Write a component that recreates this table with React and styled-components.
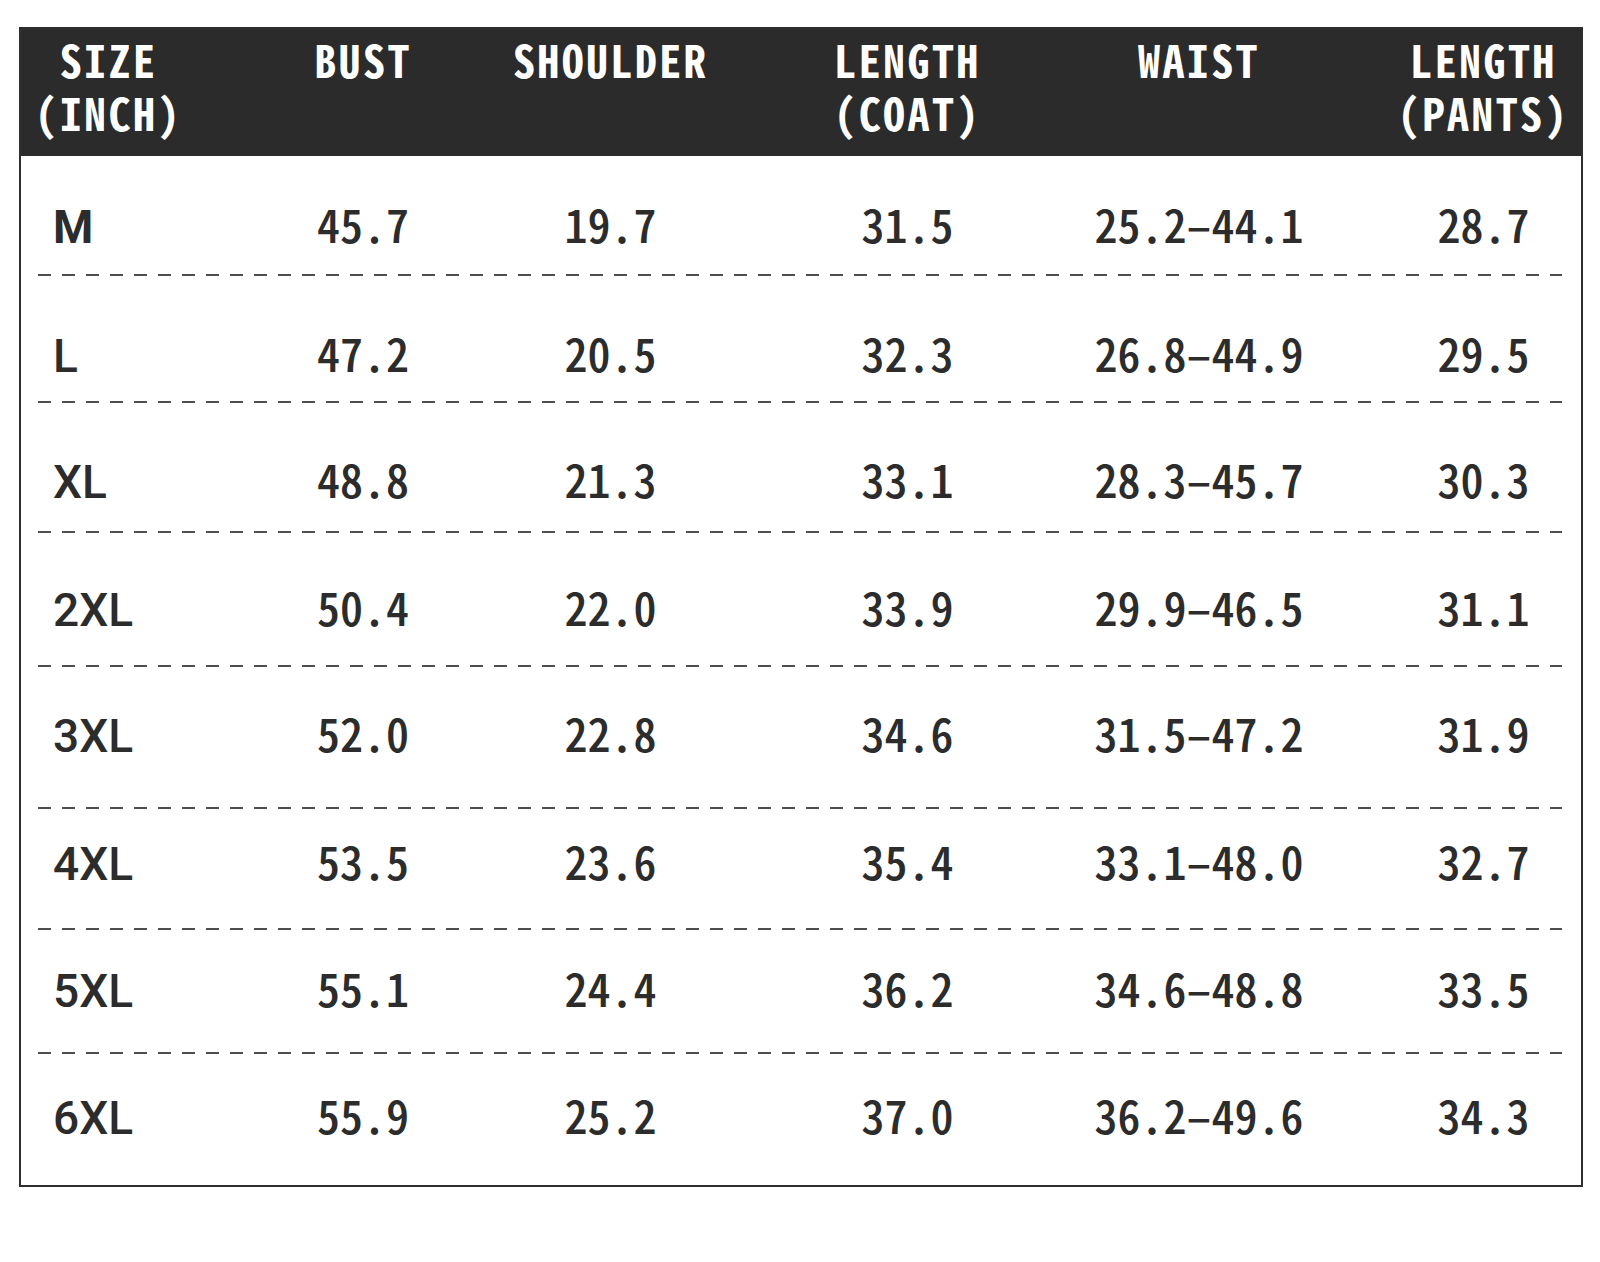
import styled, { createGlobalStyle } from 'styled-components';

const columns = [
  { title: 'SIZE\n(INCH)', width: 215, shift: -20 },
  { title: 'BUST', width: 250, shift: 2 },
  { title: 'SHOULDER', width: 273, shift: -12 },
  { title: 'LENGTH\n(COAT)', width: 295, shift: 1 },
  { title: 'WAIST', width: 288, shift: 1 },
  { title: 'LENGTH\n(PANTS)', width: 239, shift: 22 },
];

// above / below: space around the text line, the dashed rules are not evenly spread
const rows = [
  { size: 'M', values: ['45.7', '19.7', '31.5', '25.2–44.1', '28.7'], above: 44, below: 28, strong: true },
  { size: 'L', values: ['47.2', '20.5', '32.3', '26.8–44.9', '29.5'], above: 53, below: 26 },
  { size: 'XL', values: ['48.8', '21.3', '33.1', '28.3–45.7', '30.3'], above: 52, below: 30 },
  { size: '2XL', values: ['50.4', '22.0', '33.9', '29.9–46.5', '31.1'], above: 50, below: 36 },
  { size: '3XL', values: ['52.0', '22.8', '34.6', '31.5–47.2', '31.9'], above: 42, below: 52 },
  { size: '4XL', values: ['53.5', '23.6', '35.4', '33.1–48.0', '32.7'], above: 28, below: 45 },
  { size: '5XL', values: ['55.1', '24.4', '36.2', '34.6–48.8', '33.5'], above: 34, below: 42 },
  { size: '6XL', values: ['55.9', '25.2', '37.0', '36.2–49.6', '34.3'], above: 37, below: 48 },
];

const gridTemplate = columns.map((c) => `${c.width}px`).join(' ');

function App() {
  return (
    <>
      <GlobalStyle />
      <Table>
        <Header>
          {columns.map((col) => (
            <HeadCell key={col.title} $shift={col.shift}>
              {col.title}
            </HeadCell>
          ))}
        </Header>
        <Body>
          {rows.map((row, i) => (
            <div key={row.size}>
              <Row $above={row.above} $below={row.below}>
                <SizeCell $strong={row.strong}>{row.size}</SizeCell>
                {row.values.map((v, j) => (
                  <Cell key={j} $shift={columns[j + 1].shift}>
                    {v}
                  </Cell>
                ))}
              </Row>
              {i < rows.length - 1 && <Dashes />}
            </div>
          ))}
        </Body>
      </Table>
    </>
  );
}

const GlobalStyle = createGlobalStyle`
  body {
    margin: 0;
    background: #fff;
    font-family: "Noto Sans CJK SC", "DejaVu Sans", sans-serif;
    font-feature-settings: "hwid" 1;
  }
`;

const Table = styled.div`
  box-sizing: border-box;
  width: 1564px;
  margin: 27px 0 0 19px;
  border: 2px solid #2e2e2e;
`;

const Header = styled.div`
  box-sizing: border-box;
  height: 127px;
  padding-top: 4px;
  background: #2b2b2b;
  display: grid;
  grid-template-columns: ${gridTemplate};
  align-items: start;
`;

const HeadCell = styled.div`
  color: #fff;
  font-size: 44px;
  font-weight: 700;
  line-height: 53px;
  letter-spacing: 2.4px;
  text-align: center;
  white-space: pre;
  padding-left: ${(p) => Math.max(0, p.$shift * 2)}px;
  padding-right: ${(p) => Math.max(0, -p.$shift * 2)}px;
`;

const Body = styled.div`
  display: flex;
  flex-direction: column;
`;

const Row = styled.div`
  display: grid;
  grid-template-columns: ${gridTemplate};
  padding-top: ${(p) => p.$above}px;
  padding-bottom: ${(p) => p.$below}px;
  font-size: 46px;
  line-height: 46px;
  font-weight: 500;
  color: #2c2c2c;
  white-space: nowrap;
`;

const SizeCell = styled.div`
  padding: 4px 0 0 32px;
  height: 42px;
  font-family: Roboto, "Liberation Sans", sans-serif;
  font-weight: ${(p) => (p.$strong ? 700 : 500)};
`;

const Cell = styled.div`
  display: flex;
  justify-content: center;
  padding-left: ${(p) => Math.max(0, p.$shift * 2)}px;
  padding-right: ${(p) => Math.max(0, -p.$shift * 2)}px;
`;

const Dashes = styled.div`
  height: 2px;
  margin: 0 19px 0 17px;
  background: repeating-linear-gradient(
    90deg,
    #4e4e4e 0 13px,
    transparent 13px 24px
  );
`;

export default App;
